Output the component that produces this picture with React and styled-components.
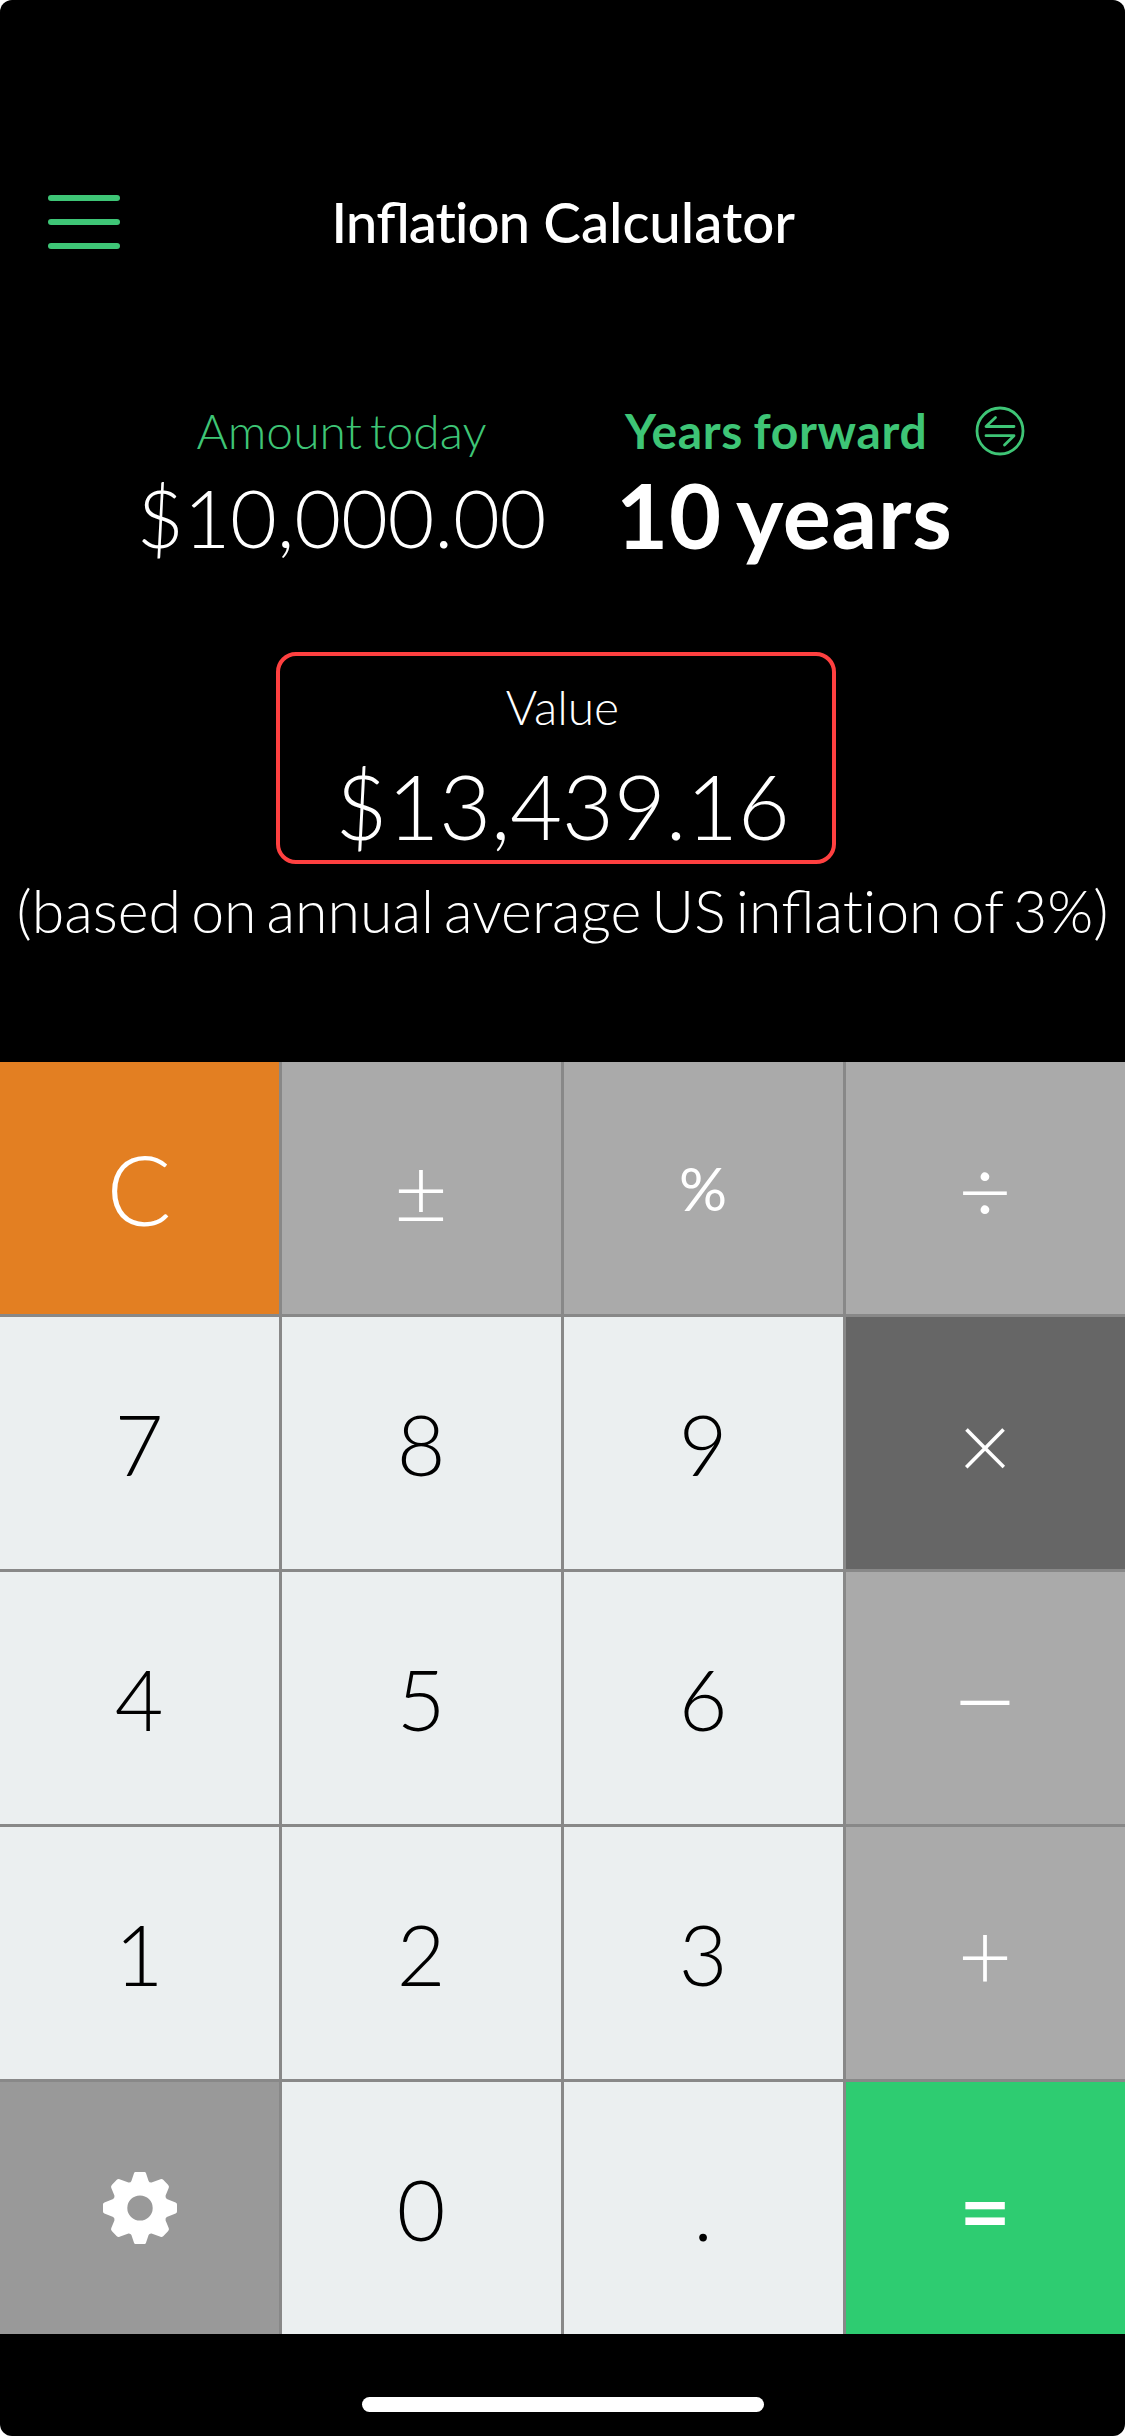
import React from "react";
import styled, { createGlobalStyle } from "styled-components";

const GlobalStyle = createGlobalStyle`
  html { background: #fff; }
  body { margin: 0; }
  * { box-sizing: border-box; }
`;

const GREEN = "#3ec576";
const LIGHT = '"Lato Light", Lato, sans-serif';

const Screen = styled.main`
  width: 1125px;
  height: 2436px;
  overflow: hidden;
  border-radius: 12px;
  background: #000;
  color: #fff;
  font-family: Lato, sans-serif;
  display: flex;
  flex-direction: column;
`;

const Display = styled.section`
  height: 1062px;
  padding-top: 154px;
  display: flex;
  flex-direction: column;
`;

const Header = styled.header`
  display: grid;
  grid-template-columns: 72px 1fr 72px;
  align-items: center;
  height: 136px;
  padding: 0 47px 0 48px;
`;

const MenuButton = styled.button`
  display: flex;
  flex-direction: column;
  gap: 18px;
  padding: 0;
  border: 0;
  background: none;
`;

const MenuBar = styled.span`
  height: 6px;
  width: 72px;
  border-radius: 3px;
  background: ${GREEN};
`;

const Title = styled.h1`
  margin: 0;
  padding-bottom: 2px;
  text-align: center;
  font-size: 56.5px;
  line-height: 60px;
  font-weight: 500;
`;

const Word = styled.span`
  letter-spacing: ${(p) => p.$tracking}px;
`;

const Ligature = styled.span`
  font-feature-settings: "liga" 1;
`;

const Entries = styled.div`
  margin-top: 112px;
  padding-left: 122px;
  display: grid;
  grid-template-columns: 439px 1fr;
  column-gap: 55px;
`;

const Entry = styled.div`
  display: flex;
  flex-direction: column;
  align-items: ${(p) => (p.$active ? "flex-start" : "center")};
  font-family: ${(p) => (p.$active ? "Lato, sans-serif" : LIGHT)};
  font-weight: ${(p) => (p.$active ? 700 : 400)};
  white-space: nowrap;
`;

const EntryLabel = styled.div`
  display: flex;
  align-items: center;
  height: 58px;
  padding-left: ${(p) => (p.$active ? "9px" : 0)};
  font-size: 48px;
  line-height: 58px;
  letter-spacing: ${(p) => (p.$active ? "0.7px" : "0")};
  word-spacing: ${(p) => (p.$active ? "-2px" : "-5px")};
  color: ${GREEN};
`;

const EntryValue = styled.div`
  margin-top: ${(p) => (p.$active ? "9px" : "12px")};
  font-size: ${(p) => (p.$active ? "90px" : "81px")};
  line-height: 90px;
  letter-spacing: ${(p) => (p.$active ? "0.7px" : "-0.3px")};
  word-spacing: -6px;
`;

const SwapIcon = styled.svg`
  width: 50px;
  height: 50px;
  margin-left: 48px;
  fill: none;
  stroke: ${GREEN};
  stroke-width: 2.8;
  stroke-linecap: round;
  stroke-linejoin: round;
`;

const ResultBox = styled.div`
  margin: 90px 0 0 276px;
  width: 560px;
  height: 212px;
  padding: 22px 0 0 13px;
  border: 4px solid #ff4040;
  border-radius: 20px;
  text-align: center;
  font-family: ${LIGHT};
  white-space: nowrap;
`;

const ResultLabel = styled.div`
  font-size: 48px;
  line-height: 58px;
`;

const ResultValue = styled.div`
  margin-top: 15px;
  font-size: 90px;
  line-height: 108px;
  letter-spacing: -0.4px;
`;

const Note = styled.p`
  margin: 11px 0 0;
  text-align: center;
  font-family: ${LIGHT};
  font-size: 59px;
  line-height: 72px;
  word-spacing: -6px;
  letter-spacing: 0.01px;
  white-space: nowrap;
`;

const Keypad = styled.section`
  display: grid;
  grid-template-columns: repeat(4, 279px);
  grid-template-rows: repeat(5, 252px);
  gap: 3px;
  background: #888;
`;

const tones = {
  clear: { bg: "#e37f22", fg: "#fff" },
  fn: { bg: "#aaa", fg: "#fff" },
  active: { bg: "#666", fg: "#fff" },
  digit: { bg: "#ebeff0", fg: "#000" },
  settings: { bg: "#999", fg: "#fff" },
  equals: { bg: "#2ecc71", fg: "#fff" },
};

const Key = styled.button`
  display: flex;
  align-items: center;
  justify-content: center;
  padding: 2px 1px ${(p) => p.$lift || 0}px 0;
  border: 0;
  background: ${(p) => tones[p.$tone].bg};
  color: ${(p) => tones[p.$tone].fg};
  font-family: ${(p) => (p.$weight ? "Lato, sans-serif" : LIGHT)};
  font-weight: ${(p) => p.$weight || 400};
  font-size: ${(p) => p.$size || 84}px;
  line-height: 1.2;
`;

const GearIcon = styled.svg`
  width: 76px;
  height: 76px;
  margin-left: 2px;
  fill: #fff;
`;

const HomeArea = styled.footer`
  flex: 1;
  display: flex;
  justify-content: center;
  padding-top: 63px;
`;

const HomeIndicator = styled.div`
  width: 402px;
  height: 15px;
  border-radius: 8px;
  background: #fff;
`;

const Gear = () => (
  <GearIcon viewBox="-38 -38 76 76" aria-label="Settings">
    <path
      fillRule="evenodd"
      d="M-4.5-36H4.5Q5.6-36 6-34.8L8.6-27Q9.3-25.2 11.5-25.4L20.5-28.8Q22-29.4 23.2-28.2L28-23.2Q29.4-21.8 28.8-20.2L25.6-12.4Q25-10.4 26.8-9L35.6-5.4Q37-4.8 37-3.4V3.4Q37 4.8 35.6 5.4L26.8 9Q25 10.4 25.6 12.4L28.8 20.2Q29.4 21.8 28 23.2L23.2 28.2Q22 29.4 20.5 28.8L11.5 25.4Q9.3 25.2 8.6 27L6 34.8Q5.6 36 4.5 36H-4.5Q-5.6 36-6 34.8L-8.6 27Q-9.3 25.2-11.5 25.4L-20.5 28.8Q-22 29.4-23.2 28.2L-28 23.2Q-29.4 21.8-28.8 20.2L-25.6 12.4Q-25 10.4-26.8 9L-35.6 5.4Q-37 4.8-37 3.4V-3.4Q-37-4.8-35.6-5.4L-26.8-9Q-25-10.4-25.6-12.4L-28.8-20.2Q-29.4-21.8-28-23.2L-23.2-28.2Q-22-29.4-20.5-28.8L-11.5-25.4Q-9.3-25.2-8.6-27L-6-34.8Q-5.6-36-4.5-36ZM0-12.6A12.7 12.6 0 1 0 0 12.6A12.7 12.6 0 1 0 0-12.6Z"
    />
  </GearIcon>
);

const keys = [
  { label: "C", tone: "clear", size: 96 },
  { label: "±", tone: "fn", size: 94 },
  { label: "%", tone: "fn", size: 60, weight: 400, lift: 3 },
  { label: "÷", tone: "fn", size: 93 },
  { label: "7", tone: "digit" },
  { label: "8", tone: "digit" },
  { label: "9", tone: "digit" },
  { label: "×", tone: "active", size: 94 },
  { label: "4", tone: "digit" },
  { label: "5", tone: "digit" },
  { label: "6", tone: "digit" },
  { label: "−", tone: "fn", size: 118, lift: 2 },
  { label: "1", tone: "digit" },
  { label: "2", tone: "digit" },
  { label: "3", tone: "digit" },
  { label: "+", tone: "fn", size: 94 },
  { label: <Gear />, tone: "settings", lift: 2 },
  { label: "0", tone: "digit" },
  { label: ".", tone: "digit" },
  { label: "=", tone: "equals", size: 90, weight: 600 },
];

export default function App() {
  return (
    <>
      <GlobalStyle />
      <Screen>
        <Display>
          <Header>
            <MenuButton aria-label="Menu">
              <MenuBar />
              <MenuBar />
              <MenuBar />
            </MenuButton>
            <Title>
              <Word $tracking={-1.1}>
                In<Ligature>fl</Ligature>ation
              </Word>{" "}
              <Word $tracking={-0.1}>Calculator</Word>
            </Title>
          </Header>
          <Entries>
            <Entry>
              <EntryLabel>Amount today</EntryLabel>
              <EntryValue>$10,000.00</EntryValue>
            </Entry>
            <Entry $active>
              <EntryLabel $active>
                Years forward
                <SwapIcon viewBox="0 0 50 50">
                  <circle cx="25" cy="25" r="23" />
                  <path d="M39 20.5H11L20.5 11.5M11 29.7H39L29.5 39" />
                </SwapIcon>
              </EntryLabel>
              <EntryValue $active>10 years</EntryValue>
            </Entry>
          </Entries>
          <ResultBox>
            <ResultLabel>Value</ResultLabel>
            <ResultValue>$13,439.16</ResultValue>
          </ResultBox>
          <Note>
            (based on annual average US in<Ligature>fl</Ligature>ation of 3%)
          </Note>
        </Display>
        <Keypad>
          {keys.map((k, i) => (
            <Key
              key={i}
              $tone={k.tone}
              $size={k.size}
              $weight={k.weight}
              $lift={k.lift}
            >
              {k.label}
            </Key>
          ))}
        </Keypad>
        <HomeArea>
          <HomeIndicator />
        </HomeArea>
      </Screen>
    </>
  );
}
